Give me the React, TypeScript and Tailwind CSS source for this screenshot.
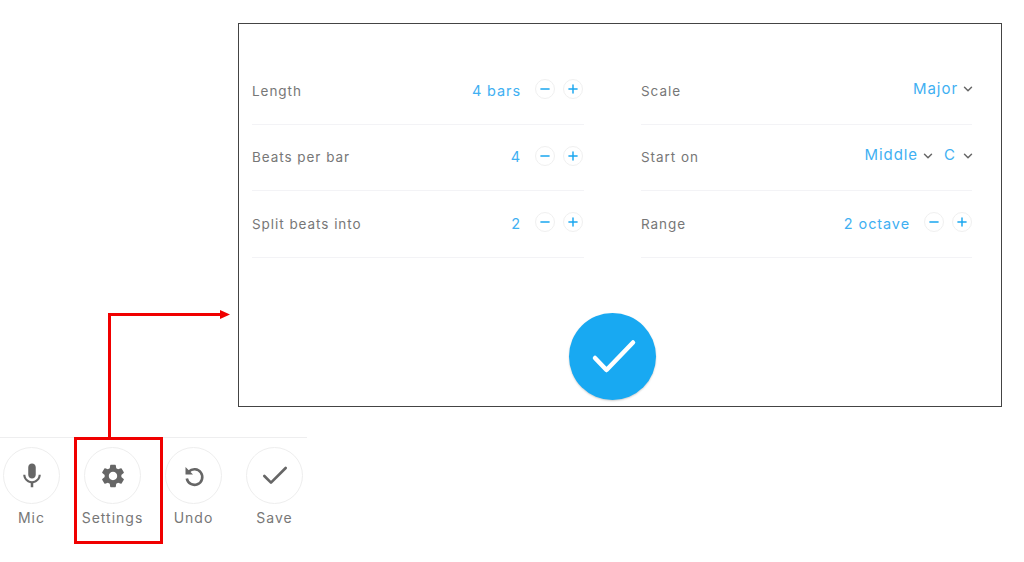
import React from 'react';
import { ChevronDown, Minus, Plus, Check } from 'lucide-react';
import { MdMic, MdSettings } from 'react-icons/md';

const Stepper = () => (
  <div className="flex items-center gap-2 -mt-[3px] mr-px">
    <button className="w-5 h-5 rounded-full border border-[#f0f0f0] flex items-center justify-center text-[#1aa7f0]">
      <Minus className="w-3.5 h-3.5" strokeWidth={2.5} />
    </button>
    <button className="w-5 h-5 rounded-full border border-[#f0f0f0] flex items-center justify-center text-[#1aa7f0]">
      <Plus className="w-3.5 h-3.5" strokeWidth={2.5} />
    </button>
  </div>
);

const Value = ({ children }: { children: React.ReactNode }) => (
  <span className="text-[14.5px] tracking-[0.9px] text-[#3fb0f2]">{children}</span>
);

// dropdown values sit a little higher and larger than the stepper ones
const Pick = ({ children }: { children: React.ReactNode }) => (
  <span className="text-[15px] tracking-[0.95px] text-[#3fb0f2] -mt-[4px]">{children}</span>
);

const Caret = () => <ChevronDown className="w-3.5 h-3.5 text-[#666666] -mt-[3px]" strokeWidth={2.5} />;

const Row = ({ label, children }: { label: string; children: React.ReactNode }) => (
  <div className="h-[66.5px] border-b border-[#f3f3f6] flex items-center justify-between">
    <span className="text-[13.5px] tracking-[0.95px] text-[#777777]">{label}</span>
    <div className="flex items-center">{children}</div>
  </div>
);

const UndoIcon = () => (
  <svg width="24" height="24" viewBox="0 0 24 24" fill="none">
    <path d="M6.8 7.7 A7.8 7.8 0 1 1 4.8 14.5" stroke="#666666" strokeWidth="2.6" />
    <path d="M3.5 3 L3.5 10.5 L11 10.5 Z" fill="#666666" />
  </svg>
);

const tools = [
  { label: 'Mic', icon: <MdMic className="text-[#666666]" size={30} /> },
  { label: 'Settings', icon: <MdSettings className="text-[#666666]" size={28} /> },
  { label: 'Undo', icon: <UndoIcon /> },
  { label: 'Save', icon: <Check className="w-8 h-8 text-[#666666]" strokeWidth={2} /> },
];

export default function App() {
  return (
    <div className="relative w-[1024px] h-[562px] bg-white overflow-hidden font-['Inter',sans-serif]">
      {/* settings panel */}
      <div className="ml-[238px] mt-[23px] w-[764px] h-[384px] border border-[#444444] pt-[34px] flex flex-col">
        <div className="w-full pl-[13px] pr-[29px] flex justify-between">
          <div className="w-[332px]">
            <Row label="Length">
              <Value>4 bars</Value>
              <div className="ml-[14px]"><Stepper /></div>
            </Row>
            <Row label="Beats per bar">
              <Value>4</Value>
              <div className="ml-[14px]"><Stepper /></div>
            </Row>
            <Row label="Split beats into">
              <Value>2</Value>
              <div className="ml-[14px]"><Stepper /></div>
            </Row>
          </div>
          <div className="w-[331px]">
            <Row label="Scale">
              <Pick>Major</Pick>
              <div className="ml-[3px] -mr-[3px]"><Caret /></div>
            </Row>
            <Row label="Start on">
              <Pick>Middle</Pick>
              <div className="ml-[3px]"><Caret /></div>
              <div className="ml-[9px] flex items-center"><Pick>C</Pick></div>
              <div className="ml-[5px] -mr-[3px]"><Caret /></div>
            </Row>
            <Row label="Range">
              <Value>2 octave</Value>
              <div className="ml-[14px] -mr-px"><Stepper /></div>
            </Row>
          </div>
        </div>
        <div className="ml-[330px] mt-[55px] w-[87px] h-[87px] rounded-full bg-[#18a9f2] shadow-[0_1px_2px_rgba(0,0,0,0.2)]">
          <svg width="87" height="87" viewBox="0 0 87 87" fill="none">
            <path d="M26 45 L37.5 57 L64 29.5" stroke="white" strokeWidth="4.5" strokeLinecap="round" strokeLinejoin="round" />
          </svg>
        </div>
      </div>

      {/* toolbar */}
      <div className="mt-[30px] w-[307px] border-t border-[#eeeeef] pt-[9px] pl-[3px] flex gap-[24px]">
        {tools.map((tool) => (
          <div key={tool.label} className="w-[57px] flex flex-col items-center">
            <div className="w-[57px] h-[57px] rounded-full border border-[#eeeeee] flex items-center justify-center">
              {tool.icon}
            </div>
            <span className="mt-[3px] text-[14px] tracking-[1px] text-[#777777] whitespace-nowrap">{tool.label}</span>
          </div>
        ))}
      </div>

      {/* red annotation */}
      <div className="absolute left-[74px] top-[437px] w-[89px] h-[107px] border-[3px] border-[#f00000]" />
      <svg className="absolute left-[100px] top-[305px]" width="135" height="135">
        <path d="M9.5 133 V9.5 H122" fill="none" stroke="#f00000" strokeWidth="3" />
        <path d="M120 5 L130 9.5 L120 14 Z" fill="#f00000" />
      </svg>
    </div>
  );
}
